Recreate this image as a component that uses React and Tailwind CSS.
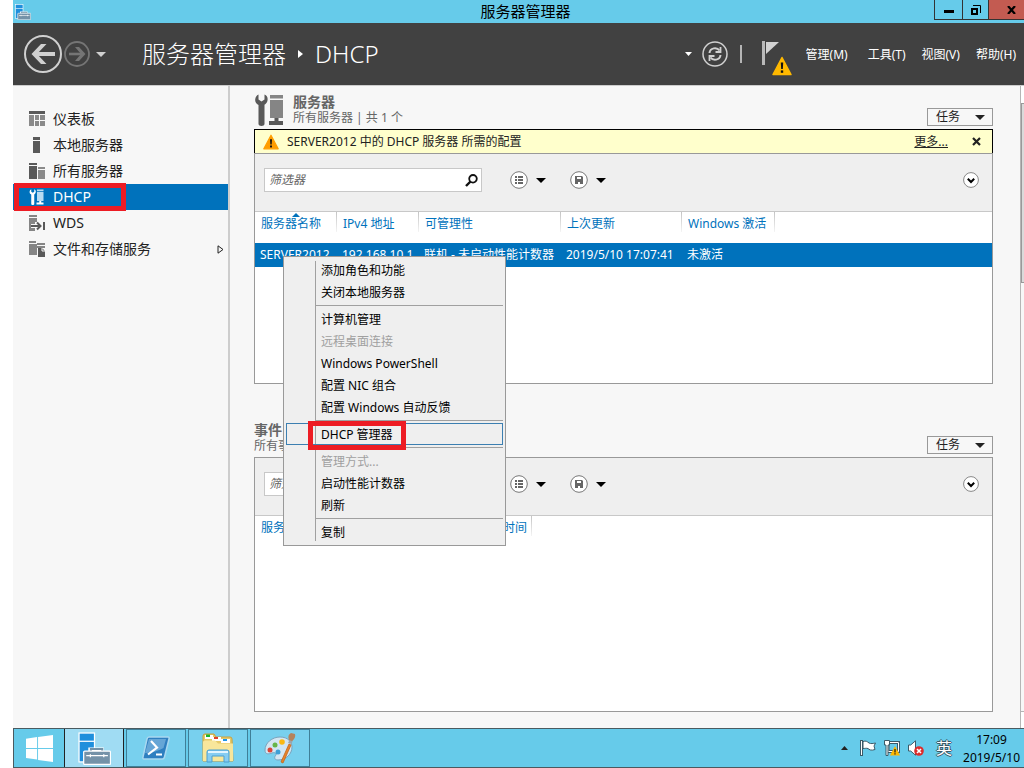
import React, { useState } from 'react';

const sidebarItems = [
  { id: 'dashboard', label: '仪表板' },
  { id: 'local', label: '本地服务器' },
  { id: 'all', label: '所有服务器' },
  { id: 'dhcp', label: 'DHCP' },
  { id: 'wds', label: 'WDS' },
  { id: 'files', label: '文件和存储服务', expandable: true },
];

const menuGroups = [
  [{ label: '添加角色和功能' }, { label: '关闭本地服务器' }],
  [
    { label: '计算机管理' },
    { label: '远程桌面连接', disabled: true },
    { label: 'Windows PowerShell' },
    { label: '配置 NIC 组合' },
    { label: '配置 Windows 自动反馈' },
  ],
  [{ label: 'DHCP 管理器', active: true }],
  [{ label: '管理方式...', disabled: true }, { label: '启动性能计数器' }, { label: '刷新' }],
  [{ label: '复制' }],
];

const serverColumns = [
  { label: '服务器名称', width: 'w-[82px]', sorted: true },
  { label: 'IPv4 地址', width: 'w-[82px]' },
  { label: '可管理性', width: 'w-[142px]' },
  { label: '上次更新', width: 'w-[121px]' },
  { label: 'Windows 激活', width: 'w-[93px]' },
];

const serverRows = [
  ['SERVER2012', '192.168.10.1', '联机 - 未启动性能计数器', '2019/5/10 17:07:41', '未激活'],
];

const eventColumns = [
  { label: '服务器名称', width: 'w-[82px]' },
  { label: 'ID', width: 'w-[26px]' },
  { label: '严重性', width: 'w-[46px]' },
  { label: '源', width: 'w-[22px]' },
  { label: '日志', width: 'w-[30px]' },
  { label: '日期和时间', width: 'w-[71px]' },
];

function Caret({ className = '' }) {
  return (
    <svg width="10" height="5" viewBox="0 0 10 5" className={className}>
      <path d="M0 0h10L5 5z" fill="currentColor" />
    </svg>
  );
}

function WarningIcon({ size, color }) {
  return (
    <svg width={size} height={size} viewBox="0 0 20 20">
      <path d="M10 1.5 19 18.5H1z" fill={color} stroke={color} strokeWidth="1.5" strokeLinejoin="round" />
      <path d="M8.8 6.5h2.4l-.4 6.5H9.2z" fill="#111" />
      <rect x="8.8" y="14.4" width="2.4" height="2.4" fill="#111" />
    </svg>
  );
}

function ServerManagerIcon({ size }) {
  return (
    <svg width={size} height={size} viewBox="0 0 32 32">
      <rect x="1" y="1" width="15" height="28" fill="#1f8fdc" stroke="#fff" strokeWidth="1.2" />
      <path d="M1 9h15" stroke="#fff" strokeWidth="1.2" />
      <path d="M12 19v-2h11v2" fill="none" stroke="#fff" strokeWidth="4" />
      <rect x="5.5" y="18.5" width="26" height="13" rx="1" fill="#7492a8" stroke="#fff" strokeWidth="1.2" />
      <path d="M12.500 18v-1.500h11V18" fill="none" stroke="#7492a8" strokeWidth="2" />
      <path d="M8 23h21M12 21.500v3M25 21.500v3" stroke="#fff" strokeWidth="1.2" />
    </svg>
  );
}

function WrenchServerIcon({ size, wrench, server, base }) {
  return (
    <svg width={size} height={size} viewBox="0 0 30 32">
      <path
        d="M3.500 0.500v5l3 2 3-2v-5c2.500 1 3.500 3 3 6-.4 2-1.500 3.500-3 4.300V30c0 2.500-6 2.500-6 0V11C1 9.800 0 8 .2 5.500.5 3.200 1.500 1.300 3.500.5z"
        fill={wrench}
      />
      <path d="M15 1h13v3.500H15zM15 6h13v18H15z" fill={server} />
      <path d="M19.500 24h4v3H28v4H14v-4h5.500z" fill={base} />
    </svg>
  );
}

function SidebarIcon({ id }) {
  if (id === 'dhcp') {
    return <WrenchServerIcon size="16" wrench="#ffffff" server="#b9dcf2" base="#ffffff" />;
  }
  return (
    <svg width="16" height="16" viewBox="0 0 16 16">
      {id === 'dashboard' && (
        <>
          <path d="M0 0h16v3H0z" fill="#595959" />
          <path d="M0 4h5v11H0zM6 4h4v5H6zM11 4h5v5h-5zM6 10h4v5H6zM11 10h5v5h-5z" fill="#8a8a8a" />
        </>
      )}
      {id === 'local' && <path d="M4 0h7v3H4zM4 4h7v12H4z" fill="#595959" />}
      {id === 'all' && (
        <>
          <path d="M0 0h8v2H0zM0 3h8v13H0z" fill="#595959" />
          <path d="M9 4h7v2H9zM9 7h7v9H9z" fill="#8a8a8a" />
        </>
      )}
      {id === 'wds' && (
        <>
          <path d="M0 0h8v2H0zM0 3h8v4H6v2H2v4h4v3H0z" fill="#858585" />
          <path d="M2 11h9M8 7.500l3.500 3.500L8 14.500" fill="none" stroke="#595959" strokeWidth="2" />
          <path d="M14 7h2v8h-2z" fill="#595959" />
        </>
      )}
      {id === 'files' && (
        <>
          <path d="M0 0h7v2H0zM0 3h8v11H0zM8 2h8v2H8z" fill="#858585" />
          <path d="M8 5h8v2H8z" fill="#858585" />
          <path d="M9 7h4l3 3v6H9z" fill="#595959" />
          <path d="M13 7v3h3" fill="none" stroke="#f7f7f7" />
        </>
      )}
    </svg>
  );
}

function TitleBar() {
  return (
    <div className="grid h-[23px] grid-cols-[1fr_auto_1fr] bg-[#66cbea]">
      <div className="pt-1 pl-0.5">
        <ServerManagerIcon size="16" />
      </div>
      <h1 className="pl-3.5 text-[15px] leading-[23px] text-black">服务器管理器</h1>
      <div className="flex h-5 justify-end">
        <button aria-label="最小化" className="flex w-[29px] items-center justify-center border border-t-0 border-[#333] pt-1">
          <svg width="10" height="3"><rect width="10" height="3" fill="#000" /></svg>
        </button>
        <button aria-label="还原" className="flex w-[25px] items-center justify-center border-b border-[#333]">
          <svg width="10" height="10" viewBox="0 0 10 10" fill="none" stroke="#000">
            <path d="M1 4h5v5H1z" strokeWidth="2" />
            <path d="M2 .5h7.500V8" />
          </svg>
        </button>
        <button aria-label="关闭" className="flex w-9 items-center justify-center border-b border-l border-[#333] bg-[#c35b51] pl-2.5">
          <svg width="9" height="8" viewBox="0 0 9 8">
            <path d="M1 0l7 8M8 0L1 8" stroke="#000" strokeWidth="2.200" />
          </svg>
        </button>
      </div>
    </div>
  );
}

function Header() {
  return (
    <header className="flex h-[62px] items-center bg-[#414141] pr-2 pl-[11px] text-white">
      <button aria-label="后退">
        <svg width="38" height="38" viewBox="0 0 38 38" fill="none" stroke="#d0d0d0">
          <circle cx="19" cy="19" r="18" strokeWidth="2" />
          <path d="M31 19H11" strokeWidth="4" />
          <path d="M22.500 9h-5.500L7.500 19 17 29h5.500L13 19z" fill="#d0d0d0" stroke="none" />
        </svg>
      </button>
      <button aria-label="前进" className="ml-0.5">
        <svg width="26" height="26" viewBox="0 0 26 26" fill="none" stroke="#757575">
          <circle cx="13" cy="13" r="12" strokeWidth="1.800" />
          <path d="M5 13h13" strokeWidth="2.600" />
          <path d="M11 6h4l6.500 7-6.500 7h-4l6-7z" fill="#757575" stroke="none" />
        </svg>
      </button>
      <button aria-label="历史记录" className="ml-1.5 text-[#d0d0d0]">
        <Caret />
      </button>
      <nav className="ml-9 flex items-center text-2xl font-light">
        <span>服务器管理器</span>
        <svg width="5" height="8" viewBox="0 0 5 8" className="mx-3">
          <path d="M0 0l5 4-5 4z" fill="#fff" />
        </svg>
        <span>DHCP</span>
      </nav>
      <div className="ml-auto flex items-center">
        <button aria-label="选项">
          <svg width="7" height="4" viewBox="0 0 7 4"><path d="M0 0h7L3.500 4z" fill="#fff" /></svg>
        </button>
        <button aria-label="刷新" className="ml-2.5">
          <svg width="26" height="26" viewBox="0 0 26 26" fill="none" stroke="#d0d0d0">
            <circle cx="13" cy="13" r="12" strokeWidth="1.500" />
            <path d="M7.500 12c.5-5.500 7.500-6 10-2.500M18.500 14c-.5 5.500-7.500 6-10 2.500" strokeWidth="2" />
            <path d="M18.500 6v5h-5M7.500 20v-5h5" strokeWidth="1.800" />
          </svg>
        </button>
        <span className="ml-3 h-[18px] w-0.5 bg-[#b5b5b5]" />
        <button aria-label="通知" className="relative mt-2 ml-5 h-[36px] w-[30px]">
          <svg width="18" height="26" viewBox="0 0 18 26" className="mb-2.5">
            <path d="M0 1h3v24H0z" fill="#b9b9b9" />
            <path d="M4 2h13L4 14z" fill="#d2d2d2" />
          </svg>
          <span className="absolute right-0 bottom-0">
            <WarningIcon size="20" color="#ffb900" />
          </span>
        </button>
        <div className="ml-3.5 flex pt-0.5 text-xs">
          <button className="mr-5">管理(M)</button>
          <button className="mr-4">工具(T)</button>
          <button className="mr-4">视图(V)</button>
          <button>帮助(H)</button>
        </div>
      </div>
    </header>
  );
}

function Sidebar({ selected, onSelect }) {
  return (
    <aside className="w-[217px] shrink-0 border-r-2 border-[#cdcdcd] bg-[#f7f7f7] pt-5">
      {sidebarItems.map((item) => (
        <button
          key={item.id}
          onClick={() => onSelect(item.id)}
          className={`relative flex h-[26px] w-full items-center gap-2 pr-1 pl-4 text-left text-sm leading-[26px] ${
            item.id === selected ? 'bg-[#0072bc] text-white' : 'text-[#222]'
          }`}
        >
          <SidebarIcon id={item.id} />
          <span>{item.label}</span>
          {item.expandable && (
            <svg width="7" height="9" viewBox="0 0 7 9" className="ml-auto">
              <path d="M1 .8v7.400L6 4.500z" fill="none" stroke="#222" />
            </svg>
          )}
          {item.id === 'dhcp' && (
            <span className="absolute -top-px left-px h-7 w-28 border-5 border-[#ed1c24]" />
          )}
        </button>
      ))}
    </aside>
  );
}

function PanelHeader({ title, subtitle, icon }) {
  return (
    <div className="flex items-end pt-2 pb-[3px]">
      {icon && <div className="mr-[7px]">{icon}</div>}
      <div className="text-[#666]">
        <h2 className="text-sm leading-4 font-bold">{title}</h2>
        <p className="text-xs leading-4">{subtitle}</p>
      </div>
      <button className="ml-auto flex h-[18px] w-[66px] items-center justify-between border border-[#999] pr-[7px] pl-2 text-xs leading-4 text-[#222]">
        任务
        <Caret />
      </button>
    </div>
  );
}

function Toolbar({ id }) {
  const [filter, setFilter] = useState('');

  return (
    <div className="flex h-[58px] items-center border-b border-[#c8c8c8] bg-[#efefef] pr-[13px] pb-[5px] pl-[9px]">
      <div className="flex h-6 w-[218px] items-center border border-[#c8c8c8] bg-white pr-[3px]">
        <input
          id={id}
          type="text"
          aria-label="筛选器"
          value={filter}
          onChange={(e) => setFilter(e.target.value)}
          placeholder="筛选器"
          className="h-[22px] min-w-0 flex-1 pl-1 text-xs leading-[22px] italic outline-none placeholder:text-[#666]"
        />
        <svg width="13" height="13" viewBox="0 0 13 13" fill="none" stroke="#111">
          <circle cx="8" cy="4.800" r="3.800" strokeWidth="1.800" />
          <path d="M5.500 7.500L1 12" strokeWidth="2.400" />
        </svg>
      </div>
      <button aria-label="列表" className="ml-7 flex items-center gap-2 text-black">
        <svg width="18" height="18" viewBox="0 0 18 18">
          <circle cx="9" cy="9" r="8.300" fill="#fff" stroke="#777" />
          <path d="M5 5h2v2H5zM8 5h5v2H8zM5 8h2v2H5zM8 8h5v2H8zM5 11h2v2H5zM8 11h5v2H8z" fill="#666" />
        </svg>
        <Caret />
      </button>
      <button aria-label="保存" className="ml-6 flex items-center gap-2 text-black">
        <svg width="18" height="18" viewBox="0 0 18 18">
          <circle cx="9" cy="9" r="8.300" fill="#fff" stroke="#777" />
          <path d="M5 5h7l1 1v7H5z" fill="#666" />
          <path d="M7 6h4v2H7zM8 11h2v2H8z" fill="#fff" />
        </svg>
        <Caret />
      </button>
      <button aria-label="展开" className="ml-auto">
        <svg width="16" height="16" viewBox="0 0 16 16">
          <circle cx="8" cy="8" r="7.400" fill="#fff" stroke="#888" />
          <path d="M4.800 6.800L8 10l3.200-3.200" fill="none" stroke="#000" strokeWidth="2" />
        </svg>
      </button>
    </div>
  );
}

function DataTable({ columns, rows }) {
  return (
    <table className="w-full table-fixed border-collapse text-left text-xs whitespace-nowrap">
      <thead>
        <tr className="h-[31px] text-[#0072bc]">
          {columns.map((col) => (
            <th key={col.label} className={`relative pt-0 pb-[7px] pl-1.5 font-normal ${col.width}`}>
              {col.label}
              {col.sorted && (
                <svg width="8" height="4" viewBox="0 0 8 4" className="absolute top-px left-[37px]">
                  <path d="M0 4l4-4 4 4z" fill="#0072bc" />
                </svg>
              )}
              <span className="absolute top-0 right-0 h-5 w-px bg-gradient-to-b from-[#c4c4c4] to-[#f4f4f4]" />
            </th>
          ))}
          <th aria-hidden="true" />
        </tr>
      </thead>
      <tbody>
        {rows.map((row) => (
          <tr key={row[0]} className="h-6 bg-[#0072bc] text-white">
            {row.map((cell) => (
              <td key={cell} className="p-0 pl-[5px]">{cell}</td>
            ))}
            <td />
          </tr>
        ))}
      </tbody>
    </table>
  );
}

function ContextMenu() {
  return (
    <div role="menu" className="absolute top-[170px] left-[53px] w-[223px] border border-[#999] bg-[#efefef] p-0.5 text-xs text-black">
      <div className="absolute top-1 bottom-1 left-[31px] w-px bg-[#a0a0a0]" />
      {menuGroups.map((group, i) => (
        <div key={i}>
          {i > 0 && <div className="my-0.5 ml-[30px] h-px bg-[#a0a0a0]" />}
          {group.map((item) => (
            <button
              key={item.label}
              role="menuitem"
              disabled={item.disabled}
              className={`relative block h-[22px] w-full border pl-[34px] text-left leading-[22px] ${
                item.active ? 'border-[#3c7fb1]' : 'border-transparent'
              } ${item.disabled ? 'text-[#a0a0a0]' : ''}`}
            >
              {item.label}
              {item.active && (
                <span className="absolute -top-[3px] left-[21px] h-[29px] w-[98px] border-5 border-[#ed1c24]" />
              )}
            </button>
          ))}
        </div>
      ))}
    </div>
  );
}

function ServersPanel() {
  const [showAlert, setShowAlert] = useState(true);

  return (
    <section>
      <PanelHeader
        title="服务器"
        subtitle="所有服务器 | 共 1 个"
        icon={<WrenchServerIcon size="32" wrench="#595959" server="#858585" base="#595959" />}
      />
      {showAlert && (
        <div className="flex h-6 items-center border border-b-0 border-black bg-[#ffffcc] pr-[11px] pl-2 text-xs text-[#222]">
          <WarningIcon size="16" color="#ff9d00" />
          <span className="ml-2">SERVER2012 中的 DHCP 服务器 所需的配置</span>
          <a href="#more" className="mr-6 ml-auto underline">更多...</a>
          <button aria-label="关闭" onClick={() => setShowAlert(false)}>
            <svg width="9" height="9" viewBox="0 0 9 9">
              <path d="M1 1l7 7M8 1L1 8" stroke="#222" strokeWidth="2.200" />
            </svg>
          </button>
        </div>
      )}
      <div className="min-h-[231px] border border-[#999] bg-white">
        <Toolbar id="server-filter" />
        <DataTable columns={serverColumns} rows={serverRows} />
      </div>
    </section>
  );
}

function EventsPanel() {
  return (
    <section className="mt-[30px] flex flex-1 flex-col">
      <PanelHeader title="事件" subtitle="所有事件" />
      <div className="flex-1 border border-[#999] bg-white">
        <Toolbar id="event-filter" />
        <DataTable columns={eventColumns} rows={[]} />
      </div>
    </section>
  );
}

function Taskbar() {
  const appClass = 'flex w-[60px] items-center justify-center border border-[#3f7f98] bg-[#78d0ee]';

  return (
    <footer className="flex h-10 border-y border-l border-[#4a5a60] bg-[#66cbea]">
      <button aria-label="开始" className="flex w-[50px] items-center justify-center">
        <svg width="27" height="27" viewBox="0 0 28 28" fill="#fff">
          <path d="M0 4l11.500-1.800V13.500H0zM12.500 2L28 0v13.500H12.500zM0 14.500h11.500v11L0 23.800zM12.500 14.500H28V28l-15.500-2z" />
        </svg>
      </button>
      <div className="flex gap-0.5">
        <button aria-label="服务器管理器" className="flex w-[60px] items-center justify-center border-x border-[#222] bg-[#a0dcf3]">
          <ServerManagerIcon size="33" />
        </button>
        <button aria-label="Windows PowerShell" className={appClass}>
          <svg width="28" height="24" viewBox="0 0 28 24">
            <path d="M7 1h19q1.500 0 1 2l-4.500 18q-.5 2-2 2H2q-1.500 0-1-2L5 3q.5-2 2-2z" fill="#2f7fc0" stroke="#a9d8f0" strokeWidth="1.500" />
            <path d="M7 3h17l-2.500 9q-9 5-18.500 5z" fill="#8cc0e4" opacity=".6" />
            <path d="M9 5l6 6.500L6 18.500M14 18.500h6" fill="none" stroke="#fff" strokeWidth="2.200" />
          </svg>
        </button>
        <button aria-label="文件资源管理器" className={appClass}>
          <svg width="32" height="30" viewBox="0 0 32 30">
            <path d="M1 28V3q0-2 2-2h9l2 3h14q2 0 2 2l1 22z" fill="#e6c969" stroke="#c9a23d" />
            <path d="M3 2h8v4H3z" fill="#fff" />
            <path d="M4 1.500h4V4H4z" fill="#18b52b" />
            <path d="M10 4h9v4h-9z" fill="#fff" />
            <path d="M12 4h4v2h-4z" fill="#df4028" />
            <path d="M19 6h9v4h-9z" fill="#fff" />
            <path d="M21 6h4v2h-4z" fill="#1e96e8" />
            <path d="M1 9q0-1.500 2-1.500h10l3 3h15V28H1z" fill="#f8e69b" />
            <path d="M5 29V19q0-2 2-2h18q2 0 2 2v10h-5v-6H10v6z" fill="#86cdf2" stroke="#4a9fd0" />
            <path d="M6 18h20v2H6z" fill="#e2f5ff" />
          </svg>
        </button>
        <button aria-label="画图" className={appClass}>
          <svg width="32" height="32" viewBox="0 0 32 32">
            <path d="M16 5c8 0 12 5 12 10 0 7-6 13-14 13-4 0-4-3-2-5 1-2-2-3-4-2-3 1-7 2-7-3C1 11 8 5 16 5z" fill="#d3e6f2" stroke="#7aa3bd" />
            <circle cx="6" cy="18" r="2.500" fill="#dc4436" />
            <circle cx="11" cy="13" r="2.500" fill="#67b548" />
            <circle cx="18" cy="10" r="2.800" fill="#fab913" />
            <circle cx="14" cy="20" r="2.500" fill="#3d9fd5" />
            <path d="M17 30l8-18 2 1-8 18z" fill="#e9832a" stroke="#c26418" strokeWidth=".8" />
            <path d="M24 11l2-4 3 1-1.500 4z" fill="#9aa5ad" />
            <path d="M25 8q-2-5 2-7l4 1q1 4-3 7z" fill="#b5835c" />
          </svg>
        </button>
      </div>
      <div className="ml-auto flex items-center gap-2 pr-1 text-black">
        <button aria-label="显示隐藏的图标" className="mr-1">
          <svg width="7" height="4" viewBox="0 0 7 4"><path d="M0 4l3.500-4L7 4z" fill="#222" /></svg>
        </button>
        <svg width="16" height="16" viewBox="0 0 16 16">
          <path d="M1.500 0v16" stroke="#3b5a68" strokeWidth="3" />
          <path d="M3 1.500c3-1 4 0 6 1.500 2 1 4 .5 6.500 0L14 6l1 3.500c-4 1.500-6 0-7-1-2-.5-3 0-5 0z" fill="#fff" stroke="#3b5a68" />
          <path d="M1.500 1v14" stroke="#fff" />
        </svg>
        <svg width="16" height="16" viewBox="0 0 16 16">
          <path d="M4 2.500h10.500v9H4z" fill="#66cbea" stroke="#3b5a68" strokeWidth="3" />
          <path d="M4 2.500h10.500v9H4z" fill="none" stroke="#fff" />
          <path d="M.5.500h5V5h-1.500v10.500h-2V5H.5z" fill="#fff" stroke="#3b5a68" />
          <path d="M11 6l5 9.500H6z" fill="#ffb900" />
          <path d="M11 9v3.500M11 13.200v1.300" stroke="#222" strokeWidth="1.300" />
        </svg>
        <svg width="16" height="16" viewBox="0 0 16 16">
          <path d="M.5 5h2.200L7.500.8v14.400L2.700 11H.5z" fill="#fff" stroke="#3b5a68" />
          <circle cx="11" cy="11" r="4.800" fill="#dc2c2c" />
          <path d="M9 9l4 4M13 9l-4 4" stroke="#fff" strokeWidth="1.600" />
        </svg>
        <button className="ml-1 text-base leading-5 text-white [text-shadow:1px_0_0_#3b5a68,-1px_0_0_#3b5a68,0_1px_0_#3b5a68,0_-1px_0_#3b5a68]">
          英
        </button>
        <div className="ml-[3px] pt-0.5 text-center text-xs leading-[18px]">
          <div>17:09</div>
          <div>2019/5/10</div>
        </div>
      </div>
    </footer>
  );
}

export default function App() {
  const [selected, setSelected] = useState('dhcp');

  return (
    <div className="flex min-h-screen flex-col bg-white pl-[13px] font-['Noto_Sans','Noto_Sans_CJK_SC',sans-serif]">
      <TitleBar />
      <Header />
      <div className="flex flex-1 border-t border-[#cdcdcd] bg-[#f7f7f7]">
        <Sidebar selected={selected} onSelect={setSelected} />
        <main className="relative flex min-w-0 flex-1 flex-col pr-[27px] pb-4 pl-6">
          <ServersPanel />
          <EventsPanel />
          <ContextMenu />
        </main>
        {/* scroll track */}
        <div className="flex w-1 shrink-0 flex-col border-l border-[#b5b5b5] bg-[#f7f7f7]">
          <div className="h-[17px] bg-white" />
          <div className="h-[180px] border-y border-l border-[#999] bg-[#dadada]" />
          <div className="mt-auto h-[17px] border-t border-[#b5b5b5] bg-white" />
        </div>
      </div>
      <Taskbar />
    </div>
  );
}
